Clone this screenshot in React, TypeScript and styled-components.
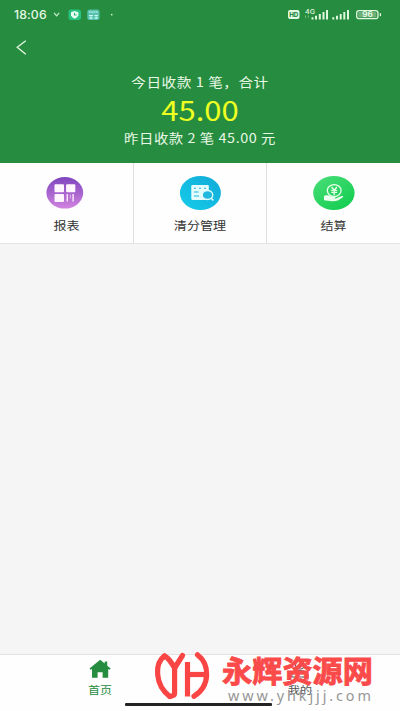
import React from "react";
import styled, { createGlobalStyle } from "styled-components";

const Global = createGlobalStyle`
  * { box-sizing: border-box; }
  body { margin: 0; background: #f5f5f5; font-family: "Noto Sans CJK SC", sans-serif; }
`;

const Page = styled.div`
  width: 400px;
  height: 711px;
  display: flex;
  flex-direction: column;
  background: #f5f5f5;
  overflow: hidden;
  position: relative;
`;

const Header = styled.header`
  height: 163px;
  background: #268c3f;
  color: #e9f8e6;
  display: flex;
  flex-direction: column;
`;

const StatusBar = styled.div`
  height: 30px;
  padding: 0 18px 0 14px;
  display: flex;
  align-items: center;
  justify-content: space-between;
`;

const StatusGroup = styled.div`
  display: flex;
  align-items: center;
  height: 30px;
`;

const Clock = styled.span`
  width: 33px;
  font: 500 12.2px/14px Inter, sans-serif;
  letter-spacing: 0.15px;
  white-space: nowrap;
  transform: translateY(0.5px) scaleY(0.95);
`;

const NavBar = styled.div`
  display: flex;
  align-items: flex-start;
  height: 36px;
  padding: 10px 0 0 16px;
`;

const Summary = styled.div`
  display: flex;
  flex-direction: column;
  align-items: center;
  padding-top: 6px;
`;

const Line = styled.div<{ $size: number; $height: number; $color?: string; $gap?: number }>`
  font-size: ${(p) => p.$size}px;
  height: ${(p) => p.$height}px;
  line-height: ${(p) => p.$height}px;
  color: ${(p) => p.$color ?? "inherit"};
  letter-spacing: ${(p) => p.$gap ?? 0}px;
  white-space: nowrap;
  transform: scaleY(0.88);
`;

const Tiles = styled.div`
  display: grid;
  grid-template-columns: 133px 133px 134px;
  height: 81px;
  background: #fefefe;
  border-bottom: 1px solid #e3e3e3;
`;

const Tile = styled.div`
  display: flex;
  flex-direction: column;
  align-items: center;
  padding-top: 12px;
  & + & { border-left: 1px solid #dedede; }
`;

const Body = styled.main`
  flex: 1;
`;

const TabBar = styled.nav`
  height: 57px;
  display: grid;
  grid-template-columns: 1fr 1fr;
  background: #fefefe;
  border-top: 1px solid #e6e1e3;
`;

const Tab = styled.div`
  display: flex;
  flex-direction: column;
  align-items: center;
  padding-top: 3px;
`;

const HomeIndicator = styled.div`
  position: absolute;
  left: 125px;
  top: 703px;
  width: 147px;
  height: 3px;
  border-radius: 1px;
  background: #232426;
`;

const Watermark = styled.div`
  position: absolute;
  left: 153px;
  top: 650px;
  display: flex;
`;

const MarkText = styled.div`
  margin-left: 9px;
  width: 156px;
`;

const MarkName = styled.div`
  font-size: 30.2px;
  line-height: 38px;
  height: 38px;
  font-weight: 700;
  color: #fa4a4a;
  -webkit-text-stroke: 0.9px #fa4a4a;
  white-space: nowrap;
  transform: scaleY(0.97);
`;

const MarkUrl = styled.div`
  padding-left: 6px;
  font: 14.4px/16px "Noto Sans", sans-serif;
  letter-spacing: 2.9px;
  color: #969696;
  white-space: nowrap;
`;

const StatusLeftIcons = () => (
  <svg width="72" height="20" viewBox="47 5 72 20">
    <path d="M54 12.8l2.6 3 2.6-3" fill="none" stroke="#c9efc9" strokeWidth="1.2" />
    <rect x="68.5" y="9.5" width="12.5" height="10.5" rx="2.5" fill="#29c381" />
    <path d="M74.7 11l3.7 1.3v3.2q-.6 2-3.7 3.2q-3.1-1.2-3.7-3.2v-3.2z" fill="#e9fff4" />
    <path d="M74.5 12.8v2.2h2" fill="none" stroke="#27b979" strokeWidth="1.1" />
    <rect x="87.3" y="9.5" width="12.2" height="10.5" rx="2.5" fill="#58c0ae" />
    <path d="M89 12h9M89 15.5h4M94.5 15.5h3.5M89 18h4M94.5 18h3.5M91 15v4M96.2 15v4" stroke="#c8fff4" strokeWidth="1.1" strokeDasharray="1.8 .5" />
    <circle cx="111.7" cy="14.7" r=".9" fill="#bdeac0" />
  </svg>
);

const StatusText = styled.text`
  font-family: Inter, sans-serif;
`;

const StatusRightIcons = () => (
  <svg width="97" height="20" viewBox="285 5 97 20">
    <rect x="288" y="10" width="11.5" height="9" rx="2" fill="#e4fae2" />
    <StatusText x="289.2" y="16.8" fontSize="6.4" fontWeight="800" fill="#268c3f" textLength="9.2" lengthAdjust="spacingAndGlyphs">HD</StatusText>
    <StatusText x="305" y="13.6" fontSize="6.5" fontWeight="500" fill="#e4fae2" textLength="10" lengthAdjust="spacingAndGlyphs">4G</StatusText>
    <path d="M305.5 15.5v3M308.3 15.5v3" stroke="#7fc489" strokeWidth="1" strokeDasharray="2 .7" />
    <path d="M312.5 17.2v2.3M316 15.8v3.7M319.8 14v5.5M323.5 12v7.5M327 10v9.5M333.3 17.2v2.3M337 15.8v3.7M340.7 14v5.5M344.3 12v7.5M348 10v9.5" stroke="#dff7dd" strokeWidth="2" />
    <rect x="356.7" y="10.7" width="21.3" height="8" rx="2.5" fill="none" stroke="#e0f8de" strokeWidth="1.3" />
    <rect x="358.2" y="12" width="18.2" height="5.5" rx="1" fill="#6db078" />
    <path d="M380.4 13.2v3" stroke="#e0f8de" strokeWidth="1.3" />
    <StatusText x="362.3" y="17.4" fontSize="7.4" fontWeight="600" fill="#effff0" textLength="10.5" lengthAdjust="spacingAndGlyphs">96</StatusText>
  </svg>
);

const BackIcon = () => (
  <svg width="12" height="16" viewBox="0 0 12 16" fill="none" stroke="#e6f8e5" strokeWidth="1.3">
    <path d="M9.8 .8L1.2 7.3L9.8 14.2" />
  </svg>
);

const ReportIcon = () => (
  <svg width="44" height="38" viewBox="44.5 175 44 38" overflow="visible">
    <defs><linearGradient id="rep" x2="0" y2="1"><stop stopColor="#7d45bd" /><stop offset="1" stopColor="#d183df" /></linearGradient></defs>
    <ellipse cx="64.3" cy="192.8" rx="18.4" ry="15.8" fill="url(#rep)" />
    <g fill="#fff5ff">
      <rect x="54" y="184.2" width="9.5" height="8" rx="1" />
      <rect x="65.6" y="184.2" width="9.2" height="8" rx="1" />
      <rect x="54" y="194" width="9.5" height="8" rx="1" />
    </g>
    <path d="M66.8 194v7.6M72.6 194v7.6" stroke="#f8e4fa" strokeWidth="1.5" />
    <path d="M69.8 194.5v4" stroke="#e9bdf0" strokeWidth="1" />
  </svg>
);

const ClearingIcon = () => (
  <svg width="44" height="38" viewBox="178 175 44 38">
    <defs><linearGradient id="clr" x1="1" y1="0" x2="0" y2="1"><stop stopColor="#11a9d8" /><stop offset="1" stopColor="#16cde9" /></linearGradient></defs>
    <ellipse cx="200.4" cy="193" rx="20.5" ry="17" fill="url(#clr)" />
    <rect x="191.3" y="185" width="17.5" height="15" rx="1.2" fill="#e5fcff" />
    <path d="M194 188.3h2M199 188.3h2M204 188.3h2M194 192h4.5M194 196h5" stroke="#1bb6dc" strokeWidth="1.1" />
    <ellipse cx="207.5" cy="195" rx="5.3" ry="4.5" fill="#21b9df" stroke="#e1fcff" strokeWidth="1.3" />
    <path d="M211.3 198.2l2 2.3" stroke="#e1fcff" strokeWidth="1.5" />
  </svg>
);

const SettleIcon = () => (
  <svg width="44" height="38" viewBox="312 175 44 38">
    <defs><linearGradient id="set" x2=".8" y2="1"><stop stopColor="#4ade79" /><stop offset="1" stopColor="#14cd50" /></linearGradient></defs>
    <ellipse cx="333.9" cy="193" rx="20.7" ry="17" fill="url(#set)" />
    <ellipse cx="334.2" cy="190.5" rx="6.9" ry="5.9" fill="none" stroke="#e7ffe9" strokeWidth="1.3" />
    <path d="M331.5 187l2.7 3.2 2.7-3.2M331.3 190.3h5.8M331.3 192.4h5.8M334.2 190v5" fill="none" stroke="#e7ffe9" strokeWidth="1.3" />
    <path d="M324 195.7q4-1.3 7 .9h4q1.5.7 0 1.6h-4.500l5 .2l6.2-2.4q2-.4 1.5 1l-4.8 3.2q-4 1.5-8.4.8l-6-.8z" fill="#efffef" />
  </svg>
);

const HomeIcon = () => (
  <svg width="24" height="22" viewBox="88 657.5 24 22">
    <path d="M100.2 659.3L89.5 668.1l1.200 1.200 1.300-.7v8.600h5.600v-5.500h5v5.500h5.600v-8.600l1.300.7 1.200-1.200-3.500-2.900v-4.200h-2.500v2.100z" fill="#268c3f" />
  </svg>
);

const ProfileIcon = () => (
  <svg width="24" height="22" viewBox="0 0 24 22" fill="none" stroke="#555" strokeWidth="1.2">
    <ellipse cx="12" cy="7" rx="4.5" ry="4" />
    <path d="M3.5 19q.5-6.5 8.5-6.5T20.500 19z" />
  </svg>
);

const YhLogo = () => (
  <svg width="60" height="52" viewBox="153 650 60 52" fill="none" stroke="#fa4545" strokeWidth="5.2" strokeLinecap="round" strokeLinejoin="round">
    <path d="M164.500 656C154.500 663 154.500 685 169.800 696.500" />
    <path d="M164.500 656Q169 658 174.600 668L182.500 655.500" />
    <path d="M174.600 668V693.500Q174.500 696 169.800 696.500" />
    <path d="M187.500 662V696.500" strokeLinecap="butt" />
    <path d="M187.500 674.500H206" strokeLinecap="butt" />
    <path d="M197.500 654.800C210 664 210.500 686 194 696.300" />
  </svg>
);

export default function App() {
  return (
    <Page>
      <Global />
      <Header>
        <StatusBar>
          <StatusGroup><Clock>18:06</Clock><StatusLeftIcons /></StatusGroup>
          <StatusGroup><StatusRightIcons /></StatusGroup>
        </StatusBar>
        <NavBar><BackIcon /></NavBar>
        <Summary>
          <Line $size={14.6} $height={20} $gap={0.55}>今日收款 1 笔，合计</Line>
          <Line $size={31} $height={36} $color="#eeff22">45.00</Line>
          <Line $size={14.4} $height={20} $gap={0.55}>昨日收款 2 笔 45.00 元</Line>
        </Summary>
      </Header>
      <Tiles>
        <Tile><ReportIcon /><Line $size={13} $height={26} $color="#333">报表</Line></Tile>
        <Tile><ClearingIcon /><Line $size={13.1} $height={26} $color="#333">清分管理</Line></Tile>
        <Tile><SettleIcon /><Line $size={13} $height={26} $color="#333">结算</Line></Tile>
      </Tiles>
      <Body />
      <TabBar>
        <Tab><HomeIcon /><Line $size={12} $height={20} $color="#268c3f">首页</Line></Tab>
        <Tab><ProfileIcon /><Line $size={12} $height={20} $color="#555">我的</Line></Tab>
      </TabBar>
      <HomeIndicator />
      <Watermark>
        <YhLogo />
        <MarkText>
          <MarkName>永辉资源网</MarkName>
          <MarkUrl>www.yhkjjj.com</MarkUrl>
        </MarkText>
      </Watermark>
    </Page>
  );
}
